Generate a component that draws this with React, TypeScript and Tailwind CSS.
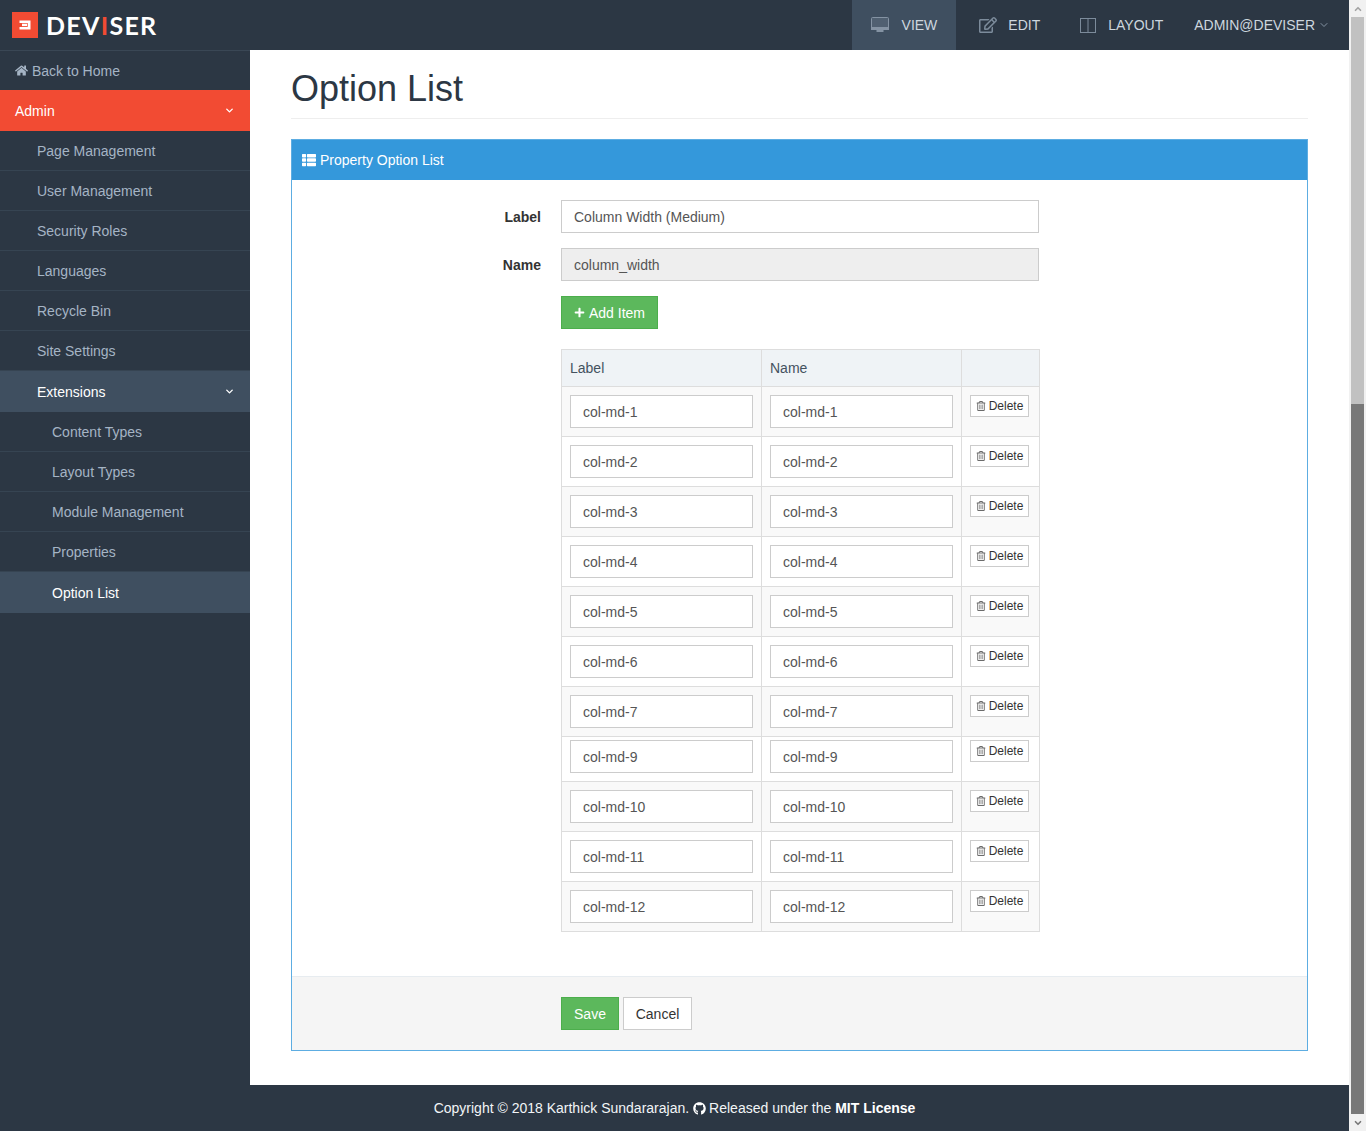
import { ChevronDown, ChevronUp } from "lucide-react";
import { FaGithub, FaHome, FaPlus, FaRegEdit, FaRegTrashAlt, FaThList } from "react-icons/fa";

const adminLinks = ["Page Management", "User Management", "Security Roles", "Languages", "Recycle Bin", "Site Settings"];
const extensionLinks = ["Content Types", "Layout Types", "Module Management", "Properties"];
const rows = ["col-md-1", "col-md-2", "col-md-3", "col-md-4", "col-md-5", "col-md-6", "col-md-7", "col-md-9", "col-md-10", "col-md-11", "col-md-12"];

function Logo() {
  return (
    <div className="flex items-center pl-3 gap-2">
      <svg width="26" height="26" viewBox="0 0 26 26">
        <rect width="26" height="26" fill="#f24b33" />
        <path d="M7.5 8.5h11v9h-11v-2.6h8.2v-3.8h-8.2z" fill="#fff" />
        <rect x="10" y="11.7" width="5" height="2.4" fill="#fff" />
      </svg>
      <span className="font-['Lato',sans-serif] font-bold text-[25px] leading-none tracking-[1.3px] text-white">
        DEV<span className="text-[#f24b33]">I</span>SER
      </span>
    </div>
  );
}

function TopLink({ icon, label, active }: { icon: React.ReactNode; label: string; active?: boolean }) {
  return (
    <a className={`flex h-full items-center gap-[11px] px-[19px] text-sm text-[#cdd6df] ${active ? "bg-[#3f4f60]" : ""}`}>
      {icon}
      <span>{label}</span>
    </a>
  );
}

function SideLink({ label, indent }: { label: string; indent: string }) {
  return (
    <a className={`flex h-10 items-center border-b border-[#364452] text-sm text-[#a5b4c5] ${indent}`}>{label}</a>
  );
}

function Row({ name, index }: { name: string; index: number }) {
  const striped = index % 2 === 0;
  const pad = name === "col-md-9" ? "pt-[3px]" : "pt-2";
  const bg = striped ? "bg-[#f9f9f9]" : "bg-white";
  const inputClass = "block h-[33px] w-[183px] border border-[#cccccc] bg-white px-3 text-sm text-[#555555] outline-none";
  return (
    <tr className={bg}>
      <td className={`border border-[#dddddd] px-2 pb-2 align-top ${pad}`}>
        <input readOnly value={name} className={inputClass} />
      </td>
      <td className={`border border-[#dddddd] px-2 pb-2 align-top ${pad}`}>
        <input readOnly value={name} className={inputClass} />
      </td>
      <td className={`border border-[#dddddd] px-2 pb-2 align-top ${pad}`}>
        <button className="flex h-[22px] w-[59px] items-center justify-center gap-[3px] border border-[#cccccc] bg-white text-xs text-[#333333]">
          <FaRegTrashAlt className="text-[10px] text-[#6b6b6b]" />
          Delete
        </button>
      </td>
    </tr>
  );
}

export default function App() {
  return (
    <div className="flex h-[1131px] w-[1366px] overflow-hidden bg-white font-['Liberation_Sans',Arial,sans-serif] text-sm text-[#333333]">
      <div className="flex w-[1349px] flex-col">
        <header className="flex h-[50px] shrink-0 items-center justify-between bg-[#2c3744]">
          <Logo />
          <nav className="flex h-full items-center">
            <TopLink
              active
              label="VIEW"
              icon={
                <svg width="20" height="16" viewBox="0 0 20 16" fill="none" className="text-[#8493a3]">
                  <rect x="0.5" y="0.5" width="17" height="12" rx="1" fill="currentColor" fillOpacity="0.25" stroke="currentColor" />
                  <rect x="0" y="10" width="18" height="3" fill="currentColor" />
                  <rect x="5.5" y="13" width="7" height="2" fill="currentColor" />
                </svg>
              }
            />
            <div className="w-[4px]" />
            <TopLink label="EDIT" icon={<FaRegEdit className="text-[18px] text-[#7c8b9b]" />} />
            <div className="w-[2px]" />
            <TopLink
              label="LAYOUT"
              icon={
                <svg width="17" height="15" viewBox="0 0 17 15" fill="none" stroke="#7c8b9b">
                  <rect x="0.5" y="0.5" width="15" height="14" />
                  <path d="M8 0.5v14" />
                </svg>
              }
            />
            <a className="ml-[12px] mr-[19px] flex items-center gap-[3px] text-sm text-[#cdd6df]">
              ADMIN@DEVISER
              <ChevronDown size={12} className="text-[#8493a3]" />
            </a>
          </nav>
        </header>

        <div className="flex min-h-0 flex-1">
          <aside className="w-[250px] shrink-0 border-t border-[#3a4755] bg-[#2c3744]">
            <a className="flex h-[39px] items-center gap-1 pl-[15px] text-sm text-[#a5b4c5]">
              <FaHome className="text-[13px]" />
              Back to Home
            </a>
            <a className="flex h-[41px] items-center justify-between bg-[#f24b33] pl-[15px] pr-[15px] text-sm text-white">
              Admin
              <ChevronDown size={11} strokeWidth={3} />
            </a>
            {adminLinks.map((link) => (
              <SideLink key={link} label={link} indent="pl-[37px]" />
            ))}
            <a className="flex h-[41px] items-center justify-between bg-[#3f4f60] pl-[37px] pr-[15px] text-sm text-white">
              Extensions
              <ChevronDown size={11} strokeWidth={3} />
            </a>
            {extensionLinks.map((link) => (
              <SideLink key={link} label={link} indent="pl-[52px]" />
            ))}
            <a className="flex h-[41px] items-center bg-[#3f4f60] pl-[52px] text-sm text-white">Option List</a>
          </aside>

          <main className="flex min-w-0 flex-1 flex-col px-[41px]">
            <div className="mt-[18px] border-b border-[#eeeeee] pb-[8px]">
              <h1 className="text-[36px] font-normal leading-[42px] text-[#2c3744]">Option List</h1>
            </div>

            <section className="mt-5 h-[912px] border border-[#5dade2]">
              <div className="flex h-10 items-center gap-1 bg-[#3498db] pl-[10px] text-sm text-white">
                <FaThList className="text-sm" />
                Property Option List
              </div>

              <div className="h-[796px] pt-5">
                <div className="flex items-center">
                  <label className="w-[249px] text-right font-bold">Label</label>
                  <input
                    readOnly
                    value="Column Width (Medium)"
                    className="ml-5 h-[33px] w-[478px] border border-[#cccccc] bg-white px-3 text-sm text-[#555555] outline-none"
                  />
                </div>
                <div className="mt-[15px] flex items-center">
                  <label className="w-[249px] text-right font-bold">Name</label>
                  <input
                    readOnly
                    value="column_width"
                    className="ml-5 h-[33px] w-[478px] border border-[#cccccc] bg-[#eeeeee] px-3 text-sm text-[#555555] outline-none"
                  />
                </div>
                <div className="ml-[269px] mt-[15px]">
                  <button className="flex h-[33px] w-[97px] items-center justify-center gap-1 border border-[#4cae4c] bg-[#5cb85c] text-sm text-white">
                    <FaPlus className="text-[11px]" />
                    Add Item
                  </button>
                  <table className="mt-5 w-[478px] table-fixed border-collapse">
                    <colgroup>
                      <col className="w-[200px]" />
                      <col className="w-[200px]" />
                      <col className="w-[78px]" />
                    </colgroup>
                    <thead>
                      <tr className="h-[37px] bg-[#eff3f6]">
                        <th className="border border-[#dddddd] px-2 text-left font-normal text-[#44525f]">Label</th>
                        <th className="border border-[#dddddd] px-2 text-left font-normal text-[#44525f]">Name</th>
                        <th className="border border-[#dddddd]" />
                      </tr>
                    </thead>
                    <tbody>
                      {rows.map((name, index) => (
                        <Row key={name} name={name} index={index} />
                      ))}
                    </tbody>
                  </table>
                </div>
              </div>

              <div className="flex h-[74px] items-center gap-1 border-t border-[#e7ecf0] bg-[#f5f5f5] pl-[269px]">
                <button className="h-[33px] w-[58px] border border-[#4cae4c] bg-[#5cb85c] text-sm text-white">Save</button>
                <button className="h-[33px] w-[69px] border border-[#cccccc] bg-white text-sm text-[#333333]">Cancel</button>
              </div>
            </section>
          </main>
        </div>

        <footer className="flex h-[46px] shrink-0 items-center justify-center gap-[3px] bg-[#2c3744] text-sm text-[#f2f5f7]">
          Copyright © 2018 Karthick Sundararajan.
          <FaGithub className="ml-[1px] text-[13px] text-white" />
          <span>
            Released under the <b className="text-white">MIT License</b>
          </span>
        </footer>
      </div>

      <div className="flex w-[17px] shrink-0 flex-col items-center bg-[#f1f1f1]">
        <div className="flex h-[17px] items-center justify-center">
          <ChevronUp size={10} strokeWidth={4} className="text-[#a3a3a3]" />
        </div>
        <div className="h-[387px] w-[13px] bg-[#c1c1c1]" />
        <div className="h-[710px] w-[13px] bg-[#787878]" />
        <div className="flex h-[17px] items-center justify-center">
          <ChevronDown size={10} strokeWidth={4} className="text-[#787878]" />
        </div>
      </div>
    </div>
  );
}
